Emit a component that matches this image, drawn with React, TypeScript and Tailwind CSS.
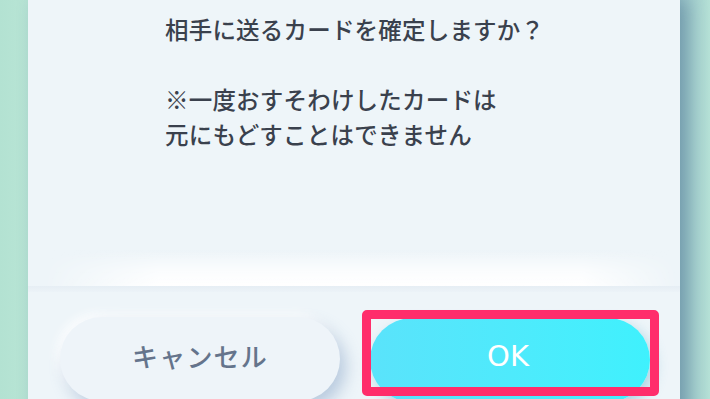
import React from "react";

export default function App() {
  const jp = { fontFamily: '"Noto Sans CJK JP", "Noto Sans", sans-serif' };
  return (
    <div className="relative w-[710px] h-[399px] overflow-hidden bg-[#b5e3d3] flex">
      <div className="w-[28px] shrink-0 bg-gradient-to-r from-[#b3e2d2] to-[#b8e5d5]" />
      <div className="relative w-[652px] h-[440px] shrink-0 rounded-b-[22px] bg-[#eef5f9] shadow-[8px_0_18px_rgba(70,110,140,0.45)] flex flex-col">
        <div
          className="pl-[137px] pt-[12px] text-[23.5px] leading-[35px] font-medium text-[#3a414d] tracking-[0.2px] h-[250px]"
          style={jp}
        >
          <p>相手に送るカードを確定しますか？</p>
          <p>&nbsp;</p>
          <p>※一度おすそわけしたカードは</p>
          <p>元にもどすことはできません</p>
        </div>
        <div className="h-[36px] bg-[linear-gradient(to_bottom,rgba(255,255,255,0),rgba(255,255,255,0.7)_55%,#ffffff)] [mask-image:linear-gradient(to_right,transparent_2%,black_20%,black_85%,transparent)]" />
        <div className="h-[6px] bg-gradient-to-b from-[#e6eef4] to-[#ecf3f8]" />
        <div className="flex gap-[30px] pl-[32px] pt-[25px]">
          <button
            className="w-[280px] h-[84px] rounded-[42px] bg-[#eef4f9] shadow-[6px_8px_16px_rgba(120,150,190,0.45),-4px_-4px_10px_rgba(255,255,255,0.9)] flex items-center justify-center pb-[8px] text-[26px] font-medium text-[#65748c] tracking-[1.2px]"
            style={jp}
          >
            キャンセル
          </button>
          <button
            className="w-[280px] h-[84px] mt-[1px] rounded-[42px] bg-gradient-to-r from-[#5ae3fb] to-[#3ff1fd] shadow-[4px_6px_14px_rgba(90,170,200,0.45)] flex items-center justify-center pb-[6px] pr-[4px] text-[29px] text-white"
            style={{ fontFamily: '"DejaVu Sans", "Noto Sans", sans-serif' }}
          >
            OK
          </button>
        </div>
      </div>
      <div className="flex-1 bg-gradient-to-r from-[#98c2c8] to-[#b5e1d6]" />
      <div className="absolute left-[362px] top-[310px] w-[297px] h-[86px] border-[9px] border-[#ff2d6b] rounded-[5px]" />
    </div>
  );
}
